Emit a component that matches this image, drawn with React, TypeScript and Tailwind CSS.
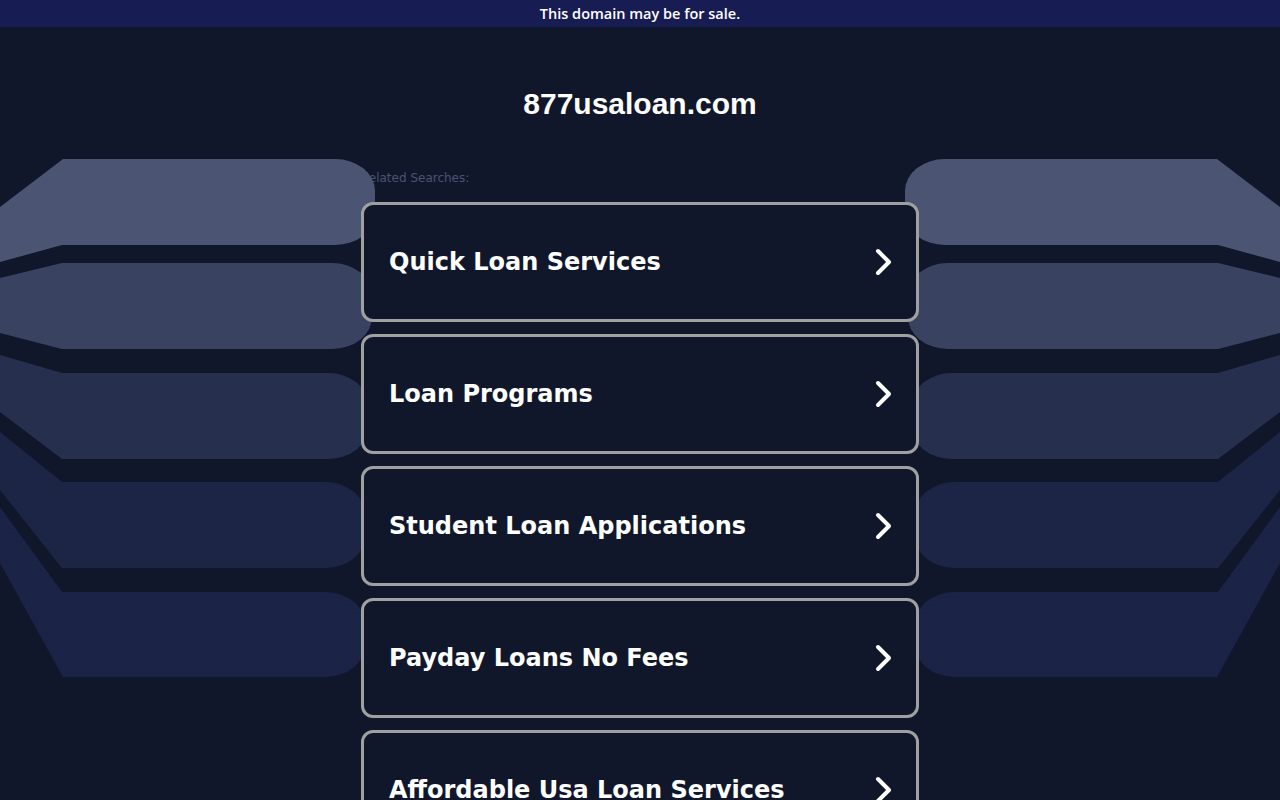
import React from 'react';

const searches = [
  'Quick Loan Services',
  'Loan Programs',
  'Student Loan Applications',
  'Payday Loans No Fees',
  'Affordable Usa Loan Services',
];

// left-hand ribbons (page coordinates), right side is the mirror
const ribbons = [
  { d: 'M63,159 H335 A40,32 0 0 1 375,191 V213 A40,32 0 0 1 335,245 H62 L0,262 V207 Z', fill: '#4b5573' },
  { d: 'M62,263 H332 A40,32 0 0 1 372,295 V317 A40,32 0 0 1 332,349 H62 L0,333 V278 Z', fill: '#3a4262' },
  { d: 'M62,373 H328 A40,32 0 0 1 368,405 V427 A40,32 0 0 1 328,459 H62 L0,412 V355 Z', fill: '#272f4f' },
  { d: 'M62,482 H325 A40,32 0 0 1 365,514 V536 A40,32 0 0 1 325,568 H62 L0,490 V432 Z', fill: '#1d2547', dots: true },
  { d: 'M62,592 H325 A40,32 0 0 1 365,624 V645 A40,32 0 0 1 325,677 H63 L0,563 V507 Z', fill: '#1b2346', dots: true },
];

const Ribbons = () => (
  <svg
    className="absolute left-0 top-0 pointer-events-none"
    width="1280"
    height="800"
    viewBox="0 0 1280 800"
  >
    <defs>
      <pattern id="dots" width="4" height="4" patternUnits="userSpaceOnUse">
        <circle cx="1" cy="1" r="0.6" fill="#11172b" opacity="0.5" />
      </pattern>
    </defs>
    {[false, true].map((flip) => (
      <g key={String(flip)} transform={flip ? 'translate(1280,0) scale(-1,1)' : undefined}>
        {ribbons.map((r, i) => (
          <g key={i}>
            <path d={r.d} fill={r.fill} />
            {r.dots && <path d={r.d} fill="url(#dots)" />}
          </g>
        ))}
      </g>
    ))}
  </svg>
);

const Chevron = () => (
  <svg width="20" height="30" viewBox="0 0 20 30" fill="none">
    <path d="M5,4 L16,15 L5,26" stroke="#ffffff" strokeWidth="4" strokeLinecap="round" strokeLinejoin="round" />
  </svg>
);

export default function App() {
  return (
    <div className="relative h-[800px] overflow-hidden bg-[#11172b]">
      <div className="h-[27px] bg-[#171c52] flex items-center justify-center text-white text-[14.5px] font-semibold font-['Open_Sans',sans-serif]">
        This domain may be for sale.
      </div>
      <h1 className="pt-[57px] text-center text-white text-[30px] leading-[40px] font-bold font-['Liberation_Sans',Arial,sans-serif]">
        877usaloan.com
      </h1>
      <div className="w-[558px] mx-auto">
        <p className="mt-[46px] mb-[16px] text-[12px] leading-[16px] text-[#4a5375] font-['DejaVu_Sans',Verdana,sans-serif]">
          Related Searches:
        </p>
      </div>
      <Ribbons />
      <div className="relative z-10 w-[558px] mx-auto flex flex-col gap-[12px]">
        {searches.map((s) => (
          <a
            key={s}
            href="#"
            className="h-[120px] shrink-0 flex items-center justify-between pl-[25px] pr-[23px] bg-[#11172b] border-[3px] border-[#a0a0a0] rounded-[12px] text-white text-[24px] font-bold font-['DejaVu_Sans',Verdana,sans-serif]"
          >
            <span>{s}</span>
            <Chevron />
          </a>
        ))}
      </div>
    </div>
  );
}
